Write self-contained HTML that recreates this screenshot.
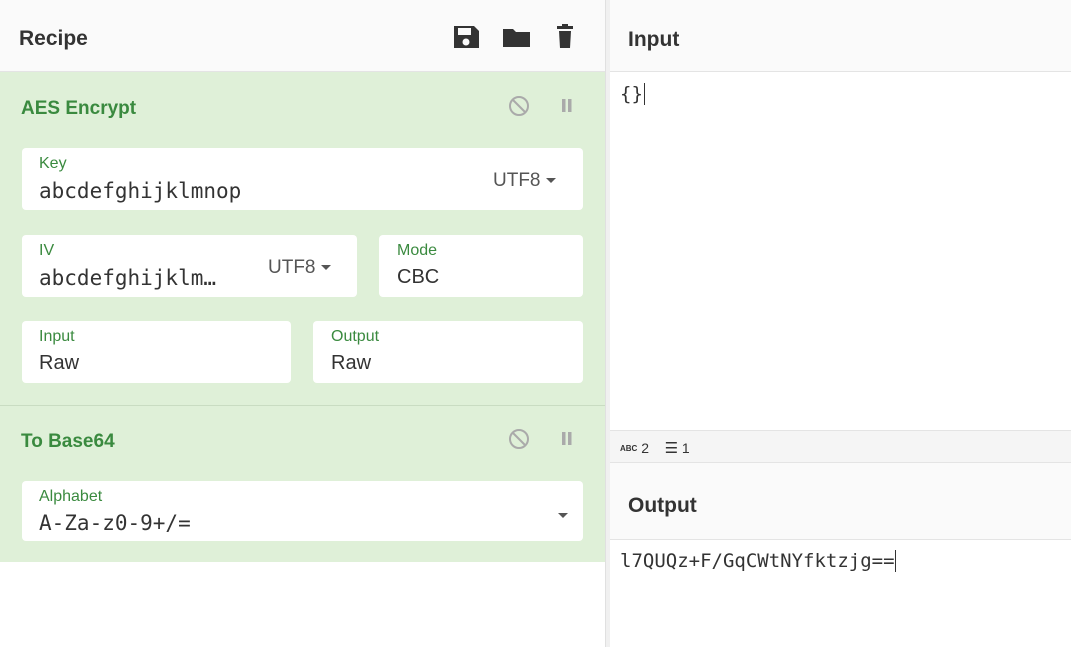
<!DOCTYPE html>
<html><head><style>
*{margin:0;padding:0;box-sizing:border-box}
body{width:1071px;height:647px;overflow:hidden;background:#fff;font-family:"Liberation Sans",sans-serif;position:relative}
.a{position:absolute}
.hdr{font-weight:bold;font-size:21px;color:#333}
.box{position:absolute;background:#fff;border-radius:4px}
.lbl{position:absolute;font-size:16px;color:#3a8a3f}
.val{position:absolute;font-size:20px;color:#333}
.mono{font-family:"DejaVu Sans Mono","Liberation Mono",monospace;font-size:19px;color:#333}
.rm{font-size:21px}
.caret{display:inline-block;width:0;height:0;border-left:5px solid transparent;border-right:5px solid transparent;border-top:5px solid #555;vertical-align:middle;margin-left:5px}
.op{font-weight:bold;font-size:19px;color:#3a8a3f}
</style></head><body>
<div class="a" style="left:0;top:0;width:605px;height:72px;background:#fafafa;border-bottom:1px solid #e4e4e4"></div>
<div class="a hdr" style="left:19px;top:27px">Recipe</div>
<svg class="a" style="left:452px;top:23px" width="130" height="28" viewBox="0 0 130 28">
<path d="M2 3h20l5 5v17H2z" fill="#333"/><rect x="6" y="5" width="13" height="7" fill="#fafafa"/><circle cx="14" cy="19" r="3.5" fill="#fafafa"/>
<path d="M51 6h10l3 3h14v15H51z" fill="#333"/>
<rect x="105" y="3" width="16" height="3" fill="#333"/><rect x="110" y="1" width="6" height="3" fill="#333"/><path d="M107 8h12l-1 17h-10z" fill="#333"/>
</svg>
<div class="a" style="left:0;top:72px;width:605px;height:490px;background:#dff0d8"></div>
<div class="a" style="left:0;top:405px;width:605px;height:1px;background:#c9dcc2"></div>
<div class="a op" style="left:21px;top:98px">AES Encrypt</div>
<div class="a op" style="left:21px;top:431px">To Base64</div>
<svg class="a" style="left:507px;top:95px" width="70" height="24"><circle cx="12" cy="11" r="9" fill="none" stroke="#aaa" stroke-width="2"/><path d="M6 5l12 12" stroke="#aaa" stroke-width="2"/><rect x="55" y="4" width="3.5" height="13" fill="#aaa"/><rect x="61" y="4" width="3.5" height="13" fill="#aaa"/></svg>
<svg class="a" style="left:507px;top:428px" width="70" height="24"><circle cx="12" cy="11" r="9" fill="none" stroke="#aaa" stroke-width="2"/><path d="M6 5l12 12" stroke="#aaa" stroke-width="2"/><rect x="55" y="4" width="3.5" height="13" fill="#aaa"/><rect x="61" y="4" width="3.5" height="13" fill="#aaa"/></svg>

<div class="box" style="left:22px;top:148px;width:561px;height:62px"></div>
<div class="lbl" style="left:39px;top:155px">Key</div>
<div class="a mono rm" style="left:39px;top:179px">abcdefghijklmnop</div>
<div class="a" style="left:493px;top:170px;font-size:19px;color:#555">UTF8<span class="caret"></span></div>

<div class="box" style="left:22px;top:235px;width:335px;height:62px"></div>
<div class="lbl" style="left:39px;top:242px">IV</div>
<div class="a mono rm" style="left:39px;top:266px">abcdefghijklm…</div>
<div class="a" style="left:268px;top:257px;font-size:19px;color:#555">UTF8<span class="caret"></span></div>
<div class="box" style="left:379px;top:235px;width:204px;height:62px"></div>
<div class="lbl" style="left:397px;top:242px">Mode</div>
<div class="val" style="left:397px;top:266px">CBC</div>

<div class="box" style="left:22px;top:321px;width:269px;height:62px"></div>
<div class="lbl" style="left:39px;top:328px">Input</div>
<div class="val" style="left:39px;top:352px">Raw</div>
<div class="box" style="left:313px;top:321px;width:270px;height:62px"></div>
<div class="lbl" style="left:331px;top:328px">Output</div>
<div class="val" style="left:331px;top:352px">Raw</div>

<div class="box" style="left:22px;top:481px;width:561px;height:60px"></div>
<div class="lbl" style="left:39px;top:488px">Alphabet</div>
<div class="a mono rm" style="left:39px;top:511px">A-Za-z0-9+/=</div>
<div class="a" style="left:553px;top:507px"><span class="caret"></span></div>

<div class="a" style="left:605px;top:0;width:5px;height:647px;background:#f0f0f0;border-left:1px solid #e0e0e0"></div>
<div class="a" style="left:610px;top:0;width:461px;height:72px;background:#fafafa;border-bottom:1px solid #e4e4e4"></div>
<div class="a hdr" style="left:628px;top:28px">Input</div>
<div class="a mono" style="left:620px;top:83px">{}<span style="border-left:1px solid #333;margin-left:1px"></span></div>
<div class="a" style="left:610px;top:430px;width:461px;height:33px;background:#f5f5f5;border-top:1px solid #e4e4e4;border-bottom:1px solid #e4e4e4"></div>
<div class="a" style="left:620px;top:439px;font-size:14px;color:#333"><span style="font-size:8px;font-weight:bold;vertical-align:2px">ABC</span> 2 &nbsp;&nbsp;&nbsp;<span style="font-size:15px">☰</span> 1</div>
<div class="a" style="left:610px;top:463px;width:461px;height:77px;background:#fafafa;border-bottom:1px solid #e4e4e4"></div>
<div class="a hdr" style="left:628px;top:494px">Output</div>
<div class="a mono" style="left:620px;top:550px">l7QUQz+F/GqCWtNYfktzjg==<span style="border-left:1px solid #333"></span></div>
</body></html>
